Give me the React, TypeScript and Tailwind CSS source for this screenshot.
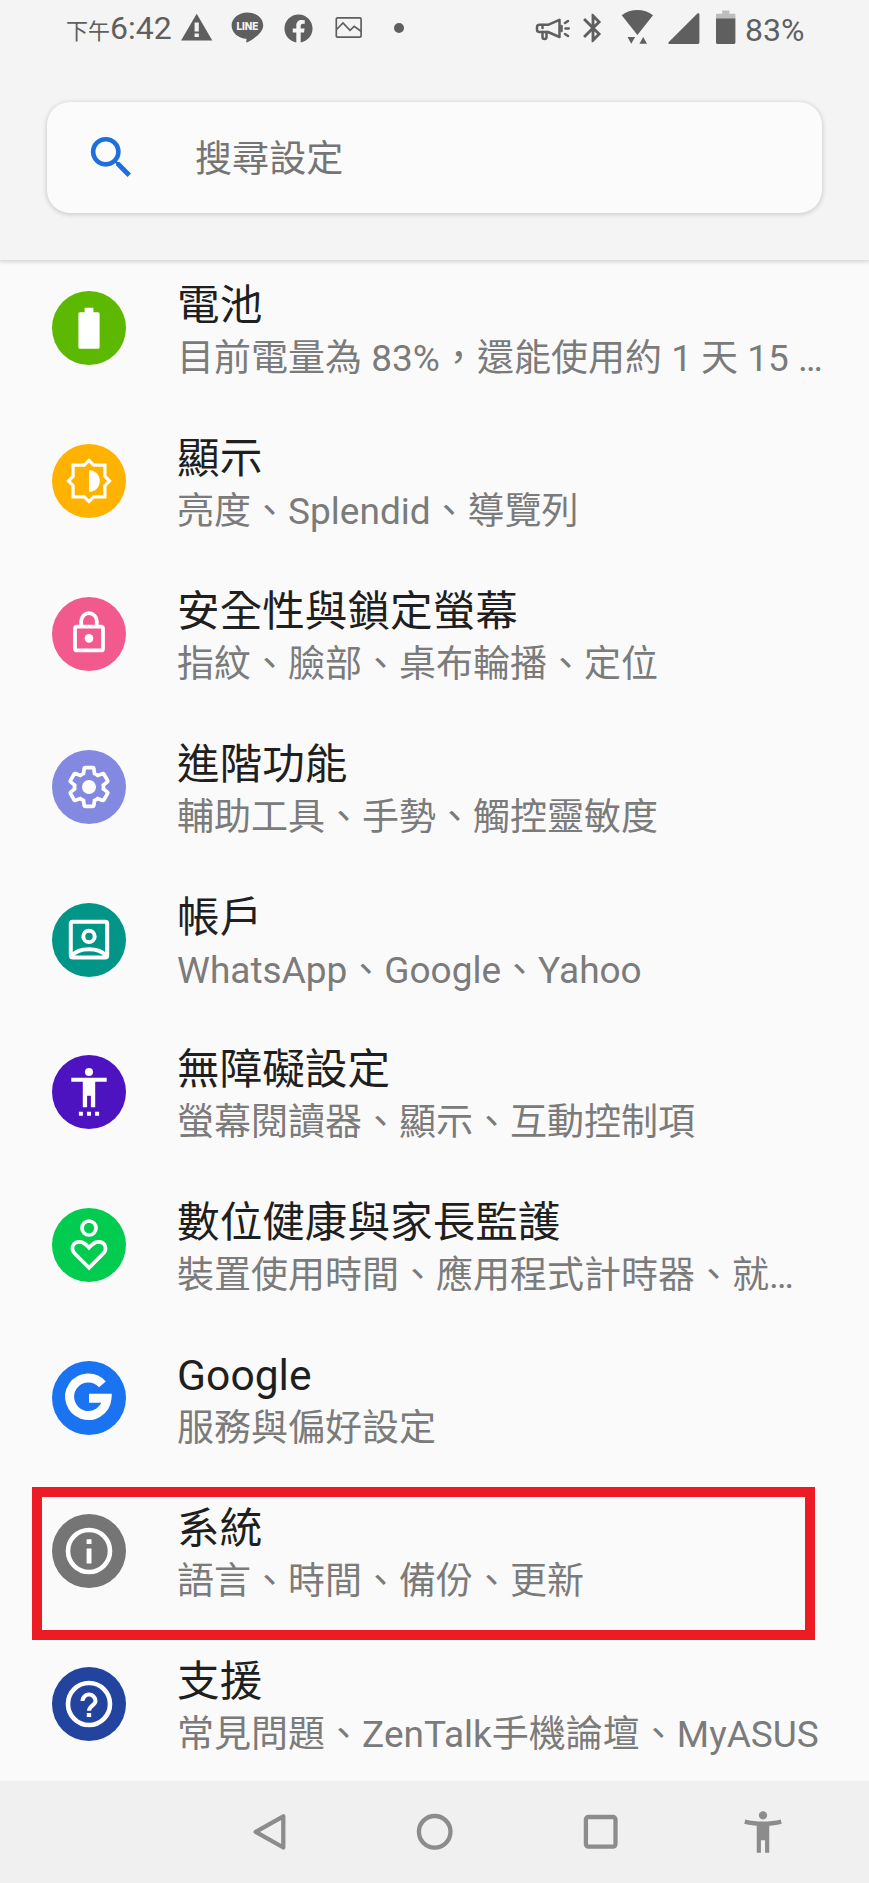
import type { ReactNode } from "react";
import { FaFacebook } from "react-icons/fa";
import { MdAccessibilityNew, MdBluetooth, MdSearch } from "react-icons/md";

type SettingItem = {
  title: string;
  summary: string;
  color: string;
  icon: ReactNode;
  highlighted?: boolean;
};

const GEAR =
  "M19.43 12.98c.04-.32.07-.64.07-.98 0-.34-.03-.66-.07-.98l2.11-1.65c.19-.15.24-.42.12-.64l-2-3.46c-.09-.16-.26-.25-.44-.25-.06 0-.12.01-.17.03l-2.49 1c-.52-.4-1.08-.73-1.69-.98l-.38-2.65C14.46 2.18 14.25 2 14 2h-4c-.25 0-.46.18-.49.42l-.38 2.65c-.61.25-1.17.59-1.69.98l-2.49-1c-.06-.02-.12-.03-.18-.03-.17 0-.34.09-.43.25l-2 3.46c-.13.22-.07.49.12.64l2.11 1.65c-.04.32-.07.65-.07.98 0 .33.03.66.07.98l-2.11 1.65c-.19.15-.24.42-.12.64l2 3.46c.09.16.26.25.44.25.06 0 .12-.01.17-.03l2.49-1c.52.4 1.08.73 1.69.98l.38 2.65c.03.24.24.42.49.42h4c.25 0 .46-.18.49-.42l.38-2.65c.61-.25 1.17-.59 1.69-.98l2.49 1c.06.02.12.03.18.03.17 0 .34-.09.43-.25l2-3.46c.12-.22.07-.49-.12-.64l-2.11-1.65z";

const items: SettingItem[] = [
  {
    title: "電池",
    summary: "目前電量為 83%，還能使用約 1 天 15 …",
    color: "bg-[#5cb800]",
    icon: (
      <path
        d="M28 21.2h4.6v-4.4h8.8v4.4H46a1.600 1.600 0 0 1 1.600 1.600v33.400a1.600 1.600 0 0 1-1.600 1.600H28a1.600 1.600 0 0 1-1.600-1.600V22.800a1.600 1.600 0 0 1 1.600-1.600z"
        fill="#fff"
      />
    ),
  },
  {
    title: "顯示",
    summary: "亮度、Splendid、導覽列",
    color: "bg-[#ffb300]",
    icon: (
      <>
        <path
          d="M37 16.4l4.7 4.7h11.2v11.2l4.7 4.7-4.7 4.7v11.2H41.7L37 57.6l-4.7-4.7H21.1V41.7L16.4 37l4.7-4.7V21.1h11.2z"
          fill="none"
          stroke="#fff"
          strokeWidth="3.2"
        />
        <path d="M37 26.2a10.8 10.8 0 0 1 0 21.6z" fill="#fff" />
      </>
    ),
  },
  {
    title: "安全性與鎖定螢幕",
    summary: "指紋、臉部、桌布輪播、定位",
    color: "bg-[#f25a8e]",
    icon: (
      <>
        <g fill="none" stroke="#fff" strokeWidth="3.8">
          <rect x="23" y="29.6" width="28" height="23.8" rx="2" />
          <path d="M29.2 29v-5a7.8 7.8 0 0 1 15.6 0v5" />
        </g>
        <circle cx="37" cy="41.4" r="4.3" fill="#fff" />
      </>
    ),
  },
  {
    title: "進階功能",
    summary: "輔助工具、手勢、觸控靈敏度",
    color: "bg-[#8389e0]",
    icon: (
      <>
        <path
          d={GEAR}
          transform="translate(13.84 13.84) scale(1.93)"
          fill="none"
          stroke="#fff"
          strokeWidth="1.9"
        />
        <circle cx="37" cy="37" r="7" fill="#fff" />
      </>
    ),
  },
  {
    title: "帳戶",
    summary: "WhatsApp、Google、Yahoo",
    color: "bg-[#019587]",
    icon: (
      <g fill="none" stroke="#fff" strokeWidth="4">
        <rect x="18.8" y="18.8" width="36.4" height="35.8" rx="2" />
        <circle cx="37" cy="33.4" r="5.7" />
        <path d="M20 52.6C27 44.2 47 44.2 54 52.6" />
      </g>
    ),
  },
  {
    title: "無障礙設定",
    summary: "螢幕閱讀器、顯示、互動控制項",
    color: "bg-[#4d13c0]",
    icon: (
      <g fill="#fff">
        <circle cx="37" cy="17" r="4" />
        <path d="M19.3 22.8h35.4v3.9H43.2v25.6h-4.3V40.8h-3.8v11.5h-4.3V26.7H19.3z" />
        <path d="M26.9 56.8h4v4h-4zM35 56.8h4v4h-4zM43.1 56.8h4v4h-4z" />
      </g>
    ),
  },
  {
    title: "數位健康與家長監護",
    summary: "裝置使用時間、應用程式計時器、就…",
    color: "bg-[#02cc50]",
    icon: (
      <g fill="none" stroke="#fff" strokeWidth="3.7">
        <circle cx="37" cy="20" r="7" />
        <path d="M37 59.8L23 45.8C18 40.6 21 33.8 27.4 33.8c4.4 0 6.6 2.6 9.6 5.9 3-3.3 5.2-5.9 9.6-5.9 6.4 0 9.4 6.8 4.4 12z" />
      </g>
    ),
  },
  {
    title: "Google",
    summary: "服務與偏好設定",
    color: "bg-[#1a73f0]",
    icon: (
      <path
        d="M50.4 23.4A18.7 18.7 0 1 0 55 37.2H37"
        fill="none"
        stroke="#fff"
        strokeWidth="9"
      />
    ),
  },
  {
    title: "系統",
    summary: "語言、時間、備份、更新",
    color: "bg-[#757575]",
    highlighted: true,
    icon: (
      <>
        <circle cx="37" cy="37" r="21" fill="none" stroke="#fff" strokeWidth="4.6" />
        <path d="M34.6 25.3h4.9V30h-4.9zM34.6 34.6h4.9v15h-4.9z" fill="#fff" />
      </>
    ),
  },
  {
    title: "支援",
    summary: "常見問題、ZenTalk手機論壇、MyASUS",
    color: "bg-[#22439e]",
    icon: (
      <>
        <circle cx="37" cy="37" r="21" fill="none" stroke="#fff" strokeWidth="4.6" />
        <path
          d="M30.5 34a6.5 6.4 0 0 1 13 0c0 4.2-6.5 4.6-6.5 9.8"
          fill="none"
          stroke="#fff"
          strokeWidth="4"
        />
        <path d="M34.8 46h4.4v4h-4.4z" fill="#fff" />
      </>
    ),
  },
];

function StatusBar() {
  return (
    <div className="flex h-14 items-center pl-[66px] pr-[64px] text-[#5f5f5f]">
      <div className="flex w-[115px] shrink-0 items-baseline whitespace-nowrap pt-1">
        <span className="text-[22px] leading-[40px]">下午</span>
        <span className="text-[32px] leading-[40px]">6:42</span>
      </div>
      <svg viewBox="181 0 32 56" className="h-14 w-8 shrink-0" fill="currentColor">
        <path d="M196.7 13.7L212.3 40.5H181.1z" />
        <path d="M194.6 22.5h4.2v9h-4.2zM194.6 33.500h4.2v3.5h-4.2z" fill="#f4f4f4" />
      </svg>
      <svg viewBox="231 0 33 56" className="ml-[18px] h-14 w-[33px] shrink-0" fill="currentColor">
        <path d="M247.4 12.4c8.7 0 15.8 5.8 15.8 13 0 6.6-8.2 12.8-16.2 17.2-.8.3-.8-.4-.5-3.8-8.3-.6-14.900-6.300-14.900-13.400 0-7.200 7.100-13 15.800-13z" />
        <text
          x="247.4"
          y="29.5"
          textAnchor="middle"
          textLength="22"
          lengthAdjust="spacingAndGlyphs"
          fill="#f4f4f4"
          className="font-['Inter'] text-[11px] font-extrabold"
        >
          LINE
        </text>
      </svg>
      <FaFacebook className="ml-[20px] size-[29px] shrink-0" />
      <svg
        viewBox="335 0 27 56"
        className="ml-[22px] h-14 w-[27px] shrink-0"
        fill="none"
        stroke="currentColor"
        strokeWidth="1.7"
      >
        <rect x="336.3" y="17.8" width="24.8" height="19.3" rx="1.2" />
        <path d="M336.5 29.5l6.5-6.5 7 7.3 4.2-4 6.8 5" />
      </svg>
      <div className="ml-[32px] size-[10px] shrink-0 rounded-full bg-[#5f5f5f]" />

      <svg
        viewBox="535 0 35 56"
        className="ml-auto h-14 w-[35px] shrink-0"
        fill="none"
        stroke="currentColor"
        strokeWidth="2.5"
        strokeLinecap="round"
        strokeLinejoin="round"
      >
        <path d="M548 24.8l11.5-5v17.2l-11.5-5h-8.500a2.5 2.5 0 0 1-2.5-2.5v-2.200a2.5 2.5 0 0 1 2.5-2.5z" />
        <path d="M542.5 32v5a2 2 0 0 0 4 0v-5M542.5 25v3" />
        <path d="M561.5 26v5M565 23l3-2M565.5 28.4h3.3M565 34l3 2" />
      </svg>
      <MdBluetooth className="ml-[6px] size-[34px] shrink-0" />
      <svg viewBox="621 0 33 56" className="ml-[11px] h-14 w-[33px] shrink-0" fill="currentColor">
        <path d="M621.7 15.3c8.5-7 22.8-7 31.3 0L637.4 35z" />
        <path d="M627.5 37h7.6l-3.8 6.800zM639.4 43.800h7.600l-3.800-6.800z" />
      </svg>
      <svg viewBox="668 0 32 56" className="ml-[14px] h-14 w-8 shrink-0" fill="currentColor">
        <path d="M669.3 44c-1 0-1.4-1-.7-1.700l28.800-28.700c.8-.8 2-.3 2 .8v28.200c0 .8-.6 1.400-1.400 1.400z" />
      </svg>
      <svg viewBox="715 0 21 56" className="ml-[15px] h-14 w-[21px] shrink-0" fill="currentColor">
        <path d="M716 19v-4c0-.8.5-1.300 1.300-1.300h4.900v-3.200h7.200v3.200h4.800c.7 0 1.200.5 1.200 1.300v4z" fill="#bdbdbd" />
        <path d="M716 18.500h19.400v24c0 .9-.6 1.500-1.500 1.500h-16.400c-.9 0-1.500-.6-1.500-1.500z" />
      </svg>
      <span className="ml-[9px] w-[60px] shrink-0 whitespace-nowrap pt-1 text-[32px] leading-[40px]">
        83%
      </span>
    </div>
  );
}

function SettingRow({ item }: { item: SettingItem }) {
  return (
    <li className="relative flex items-start pl-[51.6px]">
      <div className={`mt-[30px] size-[74px] shrink-0 rounded-full ${item.color}`}>
        <svg viewBox="0 0 74 74" className="size-full">
          {item.icon}
        </svg>
      </div>
      <div className="ml-[51.5px] mt-[17px] whitespace-nowrap">
        <div className="text-[42.6px] leading-[54px] text-[#1f1f1f]">{item.title}</div>
        <div className="text-[37px] leading-[54px] text-[#7b7b7b]">{item.summary}</div>
      </div>
      {item.highlighted && (
        <div className="absolute left-8 top-[3px] h-[153px] w-[783px] border-[10px] border-[#ed1c24]" />
      )}
    </li>
  );
}

function NavBar() {
  return (
    <nav className="flex h-[102px] items-center gap-[115px] bg-[#f0f0f0] pl-[244px] text-[#8c8c8c]">
      <svg viewBox="0 0 50 50" className="size-[50px] shrink-0" fill="none" stroke="currentColor" strokeWidth="4.3" strokeLinejoin="round">
        <path d="M11.7 24.8L39.3 9.3v31.2z" />
      </svg>
      <svg viewBox="0 0 50 50" className="size-[50px] shrink-0" fill="none" stroke="currentColor" strokeWidth="4.3">
        <circle cx="25.700" cy="24.8" r="15.8" />
      </svg>
      <svg viewBox="0 0 50 50" className="size-[50px] shrink-0" fill="none" stroke="currentColor" strokeWidth="4.3">
        <rect x="11.9" y="10" width="29.6" height="29.6" rx="2.5" />
      </svg>
      <MdAccessibilityNew className="-ml-px size-[50px] shrink-0" />
    </nav>
  );
}

export default function App() {
  return (
    <div
      lang="zh-TW"
      className="flex h-[1883px] w-[869px] flex-col overflow-hidden bg-[#fafafa] font-['Roboto','Noto_Sans_CJK_TC',sans-serif]"
    >
      <header className="z-10 h-[260px] shrink-0 bg-[#f4f4f4] shadow-[0_1px_4px_1px_rgba(0,0,0,0.15)]">
        <StatusBar />
        <div className="ml-[47px] mt-[46px] flex h-[111px] w-[775px] items-center rounded-[23px] bg-[#fbfbfb] pl-[37px] shadow-[0_1px_4px_1px_rgba(0,0,0,0.15)]">
          <MdSearch className="size-[55px] shrink-0 text-[#1d6fdc]" />
          <span className="ml-[56px] pt-[5px] text-[37.1px] leading-[54px] text-[#757575]">搜尋設定</span>
        </div>
      </header>
      <ul className="mt-px grid h-[1520px] shrink-0 auto-rows-[152.9px] overflow-hidden">
        {items.map((item) => (
          <SettingRow key={item.title} item={item} />
        ))}
      </ul>
      <NavBar />
    </div>
  );
}
